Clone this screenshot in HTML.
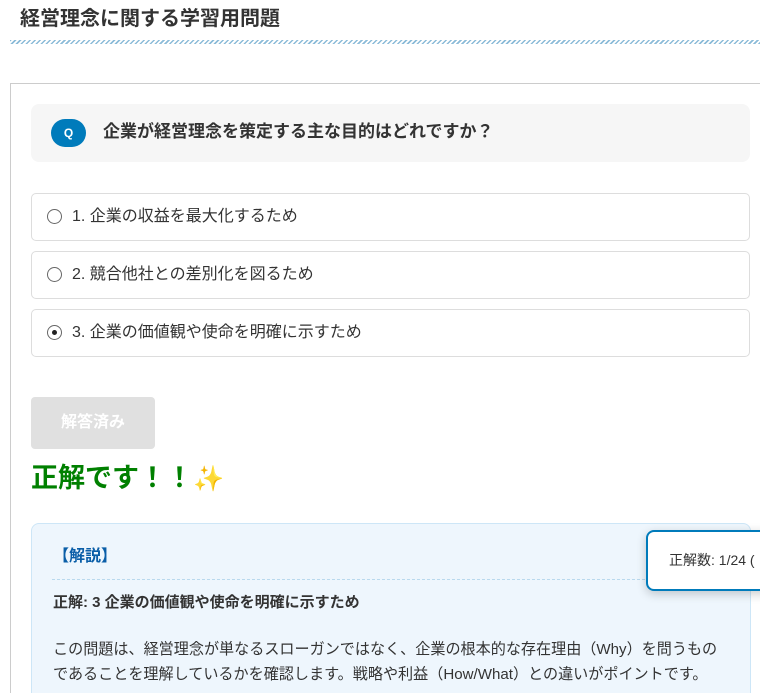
<!DOCTYPE html>
<html><head><meta charset="utf-8"><style>
*{box-sizing:border-box;margin:0;padding:0}
html,body{width:760px;height:693px;overflow:hidden}
body{background:#fff;font-family:"Liberation Sans","Noto Sans CJK JP",sans-serif;color:#333;position:relative}
.abs{position:absolute}
h1{position:absolute;left:20px;top:5px;font-size:20px;font-weight:bold;color:#333;line-height:28px}
.hatch{left:10px;top:40px;width:750px;height:4px;background:repeating-linear-gradient(-45deg,#8bbbd8 0 1.5px,transparent 1.5px 3.5px)}
.outer{left:10px;top:83px;width:760px;height:700px;border:1px solid #ccc;border-right:none}
.q{left:31px;top:104px;width:719px;height:58px;background:#f6f6f6;border-radius:8px}
.badge{left:51px;top:119px;width:35px;height:28px;border-radius:14px;background:#007bbb;color:#fff;font-size:12px;font-weight:bold;text-align:center;line-height:28px}
.qt{left:103px;top:120px;font-size:17px;font-weight:bold;line-height:24px;color:#333}
.opt{left:31px;width:719px;border:1px solid #ddd;border-radius:5px;height:48px}
.opt .r{position:absolute;left:15px;top:15px;width:15px;height:15px;border:1.5px solid #666;border-radius:50%}
.opt .r.on::after{content:"";position:absolute;left:3.5px;top:3.5px;width:5px;height:5px;border-radius:50%;background:#222}
.opt span{position:absolute;left:40px;top:11px;font-size:16px;line-height:24px;color:#333}
.btn{left:31px;top:397px;width:124px;height:52px;background:#e0e0e0;border-radius:4px;color:#fff;font-weight:bold;font-size:16px;text-align:center;line-height:52px}
.ok{left:31px;top:460px;font-size:27px;font-weight:bold;color:#008000;line-height:36px}
.exp{left:31px;top:523px;width:720px;height:220px;background:#eef6fd;border:1px solid #cde6f7;border-radius:8px}
.kh{left:53px;top:545px;font-size:16px;font-weight:bold;color:#0a5ea8;line-height:24px}
.dash{left:52px;top:579px;width:698px;border-top:1px dashed #b9d9ee}
.ans{left:53px;top:592px;font-size:15px;font-weight:bold;color:#333;line-height:22px}
.p{left:53px;top:637px;font-size:15.1px;line-height:25px;color:#333;white-space:nowrap}
.toast{left:646px;top:530px;width:130px;height:61px;background:#fff;border:2px solid #007bbb;border-radius:8px;box-shadow:0 3px 10px rgba(0,0,0,.2)}
.toast span{position:absolute;left:21px;top:18px;font-size:14px;color:#333;white-space:nowrap}
</style></head><body>
<h1>経営理念に関する学習用問題</h1>
<div class="abs hatch"></div>
<div class="abs outer"></div>
<div class="abs q"></div>
<div class="abs badge">Q</div>
<div class="abs qt">企業が経営理念を策定する主な目的はどれですか？</div>
<div class="abs opt" style="top:193px"><div class="r"></div><span>1. 企業の収益を最大化するため</span></div>
<div class="abs opt" style="top:251px"><div class="r"></div><span>2. 競合他社との差別化を図るため</span></div>
<div class="abs opt" style="top:309px"><div class="r on"></div><span>3. 企業の価値観や使命を明確に示すため</span></div>
<div class="abs btn">解答済み</div>
<div class="abs ok">正解です！！<span style="color:#f5a142;font-size:25px">✨</span></div>
<div class="abs exp"></div>
<div class="abs kh">【解説】</div>
<div class="abs dash"></div>
<div class="abs ans">正解: 3 企業の価値観や使命を明確に示すため</div>
<div class="abs p">この問題は、経営理念が単なるスローガンではなく、企業の根本的な存在理由（Why）を問うもの<br>であることを理解しているかを確認します。戦略や利益（How/What）との違いがポイントです。</div>
<div class="abs toast"><span>正解数: 1/24 (</span></div>
</body></html>
